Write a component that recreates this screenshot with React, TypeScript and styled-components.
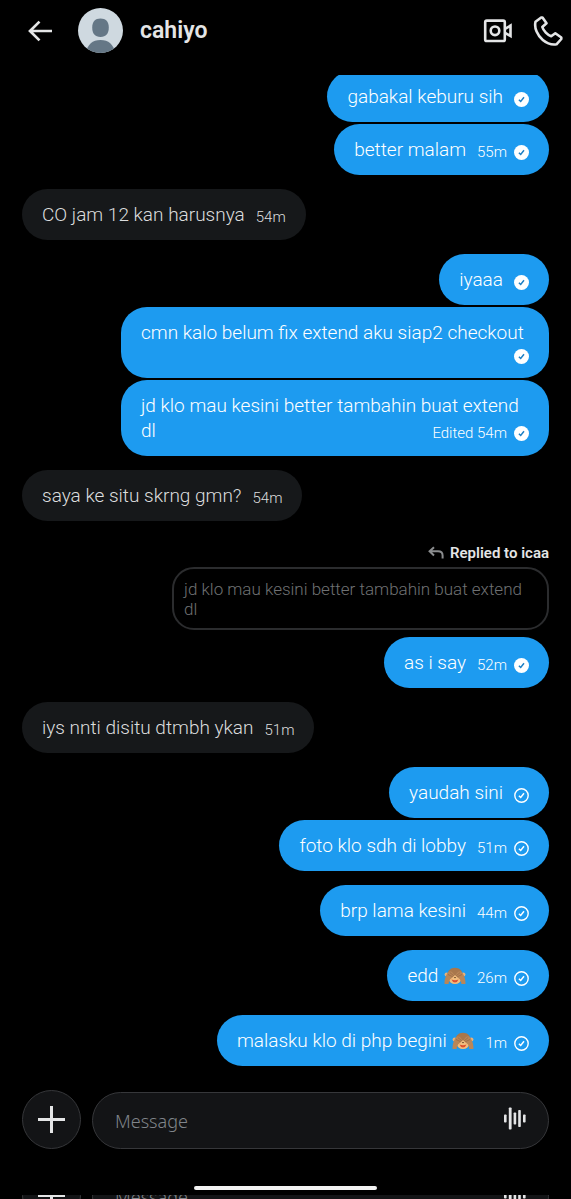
import React from "react";
import styled, { createGlobalStyle } from "styled-components";

const GlobalStyle = createGlobalStyle`
  * { box-sizing: border-box; }
  body {
    margin: 0;
    background: #000;
    color: #e4e5e6;
    font-family: Roboto, "Liberation Sans", sans-serif;
  }
`;

const Page = styled.div`
  display: flex;
  flex-direction: column;
  height: 100vh;
  overflow: hidden;
`;

const Header = styled.header`
  display: flex;
  align-items: center;
  flex: none;
  padding: 8px 8px 22px 26px;
`;

const IconButton = styled.button`
  display: flex;
  flex: none;
  padding: 0;
  border: 0;
  background: none;
  color: #e4e5e6;
`;

const AvatarPicture = styled.svg`
  flex: none;
  margin: 0 17px 0 25px;
`;

const ContactName = styled.h1`
  flex: 1;
  margin: 0;
  font-size: 23px;
  line-height: 28px;
  font-weight: 600;
`;

const HeaderActions = styled.div`
  display: flex;
  align-items: center;
  gap: 20px;
`;

const Thread = styled.main`
  display: flex;
  flex: 1;
  flex-direction: column;
  justify-content: flex-end;
  gap: 14px;
  min-height: 0;
  overflow: hidden;
  padding: 0 22px;
`;

const Group = styled.section<{ $own?: boolean }>`
  display: flex;
  flex: none;
  flex-direction: column;
  align-items: ${(p) => (p.$own ? "flex-end" : "flex-start")};
  gap: 2px;
`;

const BubbleBox = styled.div<{ $own?: boolean }>`
  display: flow-root;
  max-width: 428px;
  padding: 13px 20px;
  border-radius: 26px;
  background: ${(p) => (p.$own ? "#1d9bf0" : "#16181a")};
  color: ${(p) => (p.$own ? "#fff" : "#dcddde")};
  font-size: 19px;
  line-height: 25px;
  font-weight: 350;
`;

const Meta = styled.span<{ $ownLine?: boolean }>`
  float: right;
  display: flex;
  align-items: center;
  gap: 7px;
  height: 18px;
  margin: ${(p) => (p.$ownLine ? "2px" : "6px")} 0 0 11px;
  font-size: 15px;
  line-height: 18px;
`;

const ReplyBlock = styled.div`
  display: flex;
  flex-direction: column;
  align-items: flex-end;
  width: 100%;
  margin: 8px 0 5px;
`;

const ReplyLabel = styled.div`
  display: flex;
  align-items: center;
  gap: 6px;
  margin-bottom: 4px;
  font-size: 15px;
  line-height: 20px;
  font-weight: 600;
`;

const Quote = styled.blockquote`
  width: 377px;
  max-width: 100%;
  margin: 0;
  padding: 10px 20px 9px 10px;
  border: 2px solid #2b2c2e;
  border-radius: 22px;
  color: #6f7173;
  font-size: 17px;
  line-height: 20px;
  font-weight: 350;
`;

const ComposerBar = styled.form`
  display: flex;
  flex: none;
  align-items: flex-end;
  gap: 11px;
  padding: 0 22px;
`;

const AddButton = styled(IconButton)`
  align-items: center;
  justify-content: center;
  width: 59px;
  height: 59px;
  border: 1px solid #36373a;
  border-radius: 50%;
  background: #131416;
`;

const Field = styled.div`
  display: flex;
  flex: 1;
  align-items: center;
  min-width: 0;
  height: 57px;
  padding: 0 22px;
  border: 1px solid #36373a;
  border-radius: 29px;
  background: #131416;
`;

const MessageInput = styled.input`
  flex: 1;
  min-width: 0;
  padding: 0;
  border: 0;
  outline: 0;
  background: none;
  color: #e4e5e6;
  font-family: "Noto Sans", sans-serif;
  font-size: 18px;
  line-height: 24px;
  font-weight: 350;
  &::placeholder { color: #80858a; opacity: 1; }
`;

const Footer = styled.footer`
  display: flex;
  flex: none;
  flex-direction: column;
  padding-top: 24px;
`;

const HomeIndicator = styled.div`
  align-self: center;
  width: 183px;
  height: 4px;
  margin: 37px 0 5px;
  border-radius: 2px;
  background: #f3f3f3;
`;

const Peek = styled.div`
  height: 4px;
  overflow: hidden;
`;

const PeekContent = styled.div`
  margin-top: -29px;
`;

const Monkey = styled.svg`
  margin-left: 1px;
  vertical-align: -3px;
`;

function SeenMark({ filled }: { filled?: boolean }) {
  return (
    <svg width="15" height="15" viewBox="0 0 15 15" fill="none" role="img" aria-label={filled ? "Seen" : "Sent"}>
      {filled ? <circle cx="7.5" cy="7.5" r="7.5" fill="#fff" /> : <circle cx="7.5" cy="7.5" r="6.7" stroke="#fff" strokeWidth="1.4" />}
      <path d="M4.9 7.8 6.7 9.5 10 5.3" stroke={filled ? "#1d7fc4" : "#fff"} strokeWidth="1.5" />
    </svg>
  );
}

function SeeNoEvil() {
  return (
    <Monkey width="22" height="18" viewBox="0 0 22 18" role="img" aria-label="see-no-evil monkey">
      <circle cx="2.6" cy="7.5" r="2" fill="#e8b27c" />
      <circle cx="19.4" cy="7.5" r="2" fill="#e8b27c" />
      <path d="M11 .8C15.5.8 18.2 3.6 18.4 7.5 18.6 12 17 16.8 11 16.8S3.4 12 3.6 7.5C3.8 3.6 6.5.8 11 .8Z" fill="#a8774c" />
      <ellipse cx="11" cy="12.6" rx="5.8" ry="4.3" fill="#f2bd7e" />
      <path d="M7.5 12.6Q11 14 14.5 12.6 13.6 15.4 11 15.4T7.5 12.6Z" fill="#e0502e" />
      <path d="M10.6 8.6C8.2 3.8 5.4 3 3.6 5.8 1.6 9 .3 13 .5 17H4.600C4.800 14.500 5.600 12.500 7.500 11.300Z" fill="#b98658" />
      <path d="M11.4 8.600C13.800 3.800 16.600 3 18.400 5.800 20.400 9 21.700 13 21.500 17H17.400C17.200 14.500 16.400 12.500 14.500 11.300Z" fill="#b98658" />
      <path d="M4 7.500 8.800 9.800M5.800 5.500 9.800 8.800M18 7.500 13.200 9.800M16.200 5.500 12.200 8.800" stroke="#8f6240" strokeWidth=".6" />
      <path d="M10 10.200 11 11 12 10.200" stroke="#5f3d25" strokeWidth=".8" fill="none" />
    </Monkey>
  );
}

type BubbleProps = {
  children: React.ReactNode;
  time?: string;
  own?: boolean;
  seen?: boolean;
  metaOnOwnLine?: boolean;
};

function Bubble({ children, time, own, seen, metaOnOwnLine }: BubbleProps) {
  return (
    <BubbleBox $own={own}>
      <span>{children}</span>
      <Meta $ownLine={metaOnOwnLine}>
        {time && <time>{time}</time>}
        {own && <SeenMark filled={seen} />}
      </Meta>
    </BubbleBox>
  );
}

function Composer() {
  return (
    <ComposerBar onSubmit={(e) => e.preventDefault()}>
      <AddButton type="button" aria-label="Add attachment">
        <svg width="27" height="27" viewBox="0 0 27 27" fill="none" stroke="currentColor" strokeWidth="3">
          <path d="M13.500 0v27M0 13.500h27" />
        </svg>
      </AddButton>
      <Field>
        <MessageInput type="text" placeholder="Message" aria-label="Message" />
        <IconButton type="button" aria-label="Record voice message">
          <svg width="22" height="28" viewBox="0 0 22 28" fill="currentColor">
            <rect x="0" y="7.500" width="2.600" height="8" rx=".8" />
            <rect x="4.800" y="0.500" width="2.800" height="22" rx=".8" />
            <rect x="9.600" y="5.500" width="2.600" height="12" rx=".8" />
            <rect x="14.200" y="3" width="2.600" height="17" rx=".8" />
            <rect x="19" y="7.500" width="2.600" height="8" rx=".8" />
          </svg>
        </IconButton>
      </Field>
    </ComposerBar>
  );
}

export default function App() {
  return (
    <Page>
      <GlobalStyle />
      <Header>
        <IconButton type="button" aria-label="Back">
          <svg width="27" height="24" viewBox="0 0 27 24" fill="none" stroke="currentColor" strokeWidth="2.700">
            <path d="M26 12H3.500M13.500 2.600 4 12 13.500 21.400" />
          </svg>
        </IconButton>
        <AvatarPicture width="45" height="45" viewBox="0 0 45 45" role="img" aria-label="cahiyo's profile picture">
          <defs>
            <clipPath id="avatar-circle"><circle cx="22.500" cy="22.500" r="22.500" /></clipPath>
          </defs>
          <g clipPath="url(#avatar-circle)">
            <rect width="45" height="45" fill="#cfd9e0" />
            <path d="M22.500 10.500C27.800 10.500 30.800 13.700 30.800 19.500 30.800 25.500 28 29 22.500 29S14.200 25.500 14.200 19.500C14.200 13.700 17.200 10.500 22.500 10.500Z" fill="#657786" />
            <path d="M7.500 45C9.500 36.500 14.500 32 22.500 32S35.500 36.500 37.500 45Z" fill="#657786" />
          </g>
        </AvatarPicture>
        <ContactName>cahiyo</ContactName>
        <HeaderActions>
          <IconButton type="button" aria-label="Video call">
            <svg width="30" height="24" viewBox="0 0 30 24" fill="none" stroke="currentColor" strokeWidth="2.600">
              <rect x="2.200" y="1.600" width="19.600" height="20.400" rx="1.600" />
              <circle cx="12" cy="11.800" r="4.300" />
              <path d="M22 9.800 27.500 6.600V17L22 13.800" />
            </svg>
          </IconButton>
          <IconButton type="button" aria-label="Voice call">
            <svg width="30" height="30" viewBox="0 0 30 30" fill="none" stroke="currentColor" strokeWidth="2.600" strokeLinejoin="round">
              <path d="M8.200 1.500 2.500 5.800C1 12 4.500 19.500 9.800 24 14 27.500 19 29 23.500 28.300L28.300 23V21.500L22.300 17.300 18.200 20.300C14.500 19 10.500 15 9.300 11L13.500 7.200 9.500 1.500Z" />
            </svg>
          </IconButton>
        </HeaderActions>
      </Header>

      <Thread>
        <Group $own>
          <Bubble own seen>gabakal keburu sih</Bubble>
          <Bubble own seen time="55m">better malam</Bubble>
        </Group>
        <Group>
          <Bubble time="54m">CO jam 12 kan harusnya</Bubble>
        </Group>
        <Group $own>
          <Bubble own seen>iyaaa</Bubble>
          <Bubble own seen metaOnOwnLine>cmn kalo belum fix extend aku siap2 checkout</Bubble>
          <Bubble own seen time="Edited 54m">jd klo mau kesini better tambahin buat extend dl</Bubble>
        </Group>
        <Group>
          <Bubble time="54m">saya ke situ skrng gmn?</Bubble>
        </Group>
        <Group $own>
          <ReplyBlock>
            <ReplyLabel>
              <svg width="16" height="14" viewBox="0 0 16 14" fill="none" stroke="#8b8d8f" strokeWidth="2">
                <path d="M6 1.200 1.600 5.300 6 9.400M1.800 5.300H10Q14.600 5.300 14.600 9.500V12.500" />
              </svg>
              Replied to icaa
            </ReplyLabel>
            <Quote>jd klo mau kesini better tambahin buat extend dl</Quote>
          </ReplyBlock>
          <Bubble own seen time="52m">as i say</Bubble>
        </Group>
        <Group>
          <Bubble time="51m">iys nnti disitu dtmbh ykan</Bubble>
        </Group>
        <Group $own>
          <Bubble own>yaudah sini</Bubble>
          <Bubble own time="51m">foto klo sdh di lobby</Bubble>
        </Group>
        <Group $own>
          <Bubble own time="44m">brp lama kesini</Bubble>
        </Group>
        <Group $own>
          <Bubble own time="26m">edd <SeeNoEvil /></Bubble>
        </Group>
        <Group $own>
          <Bubble own time="1m">malasku klo di php begini <SeeNoEvil /></Bubble>
        </Group>
      </Thread>

      <Footer>
        <Composer />
        <HomeIndicator />
        <Peek aria-hidden="true" inert>
          <PeekContent>
            <Composer />
          </PeekContent>
        </Peek>
      </Footer>
    </Page>
  );
}
